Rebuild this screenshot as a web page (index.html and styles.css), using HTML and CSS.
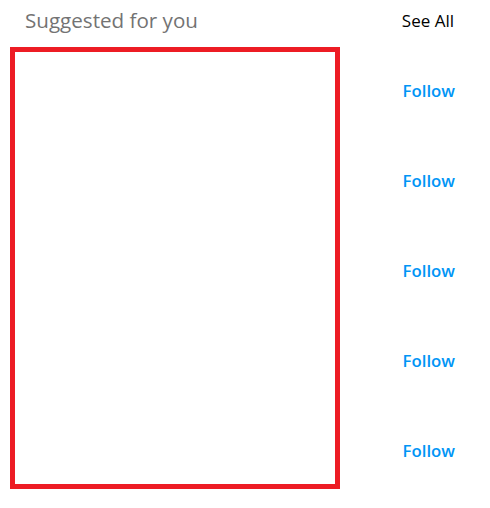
FILE: index.html
```html
<!DOCTYPE html>
<html>
<head>
<meta charset="utf-8">
<link rel="stylesheet" href="styles.css">
</head>
<body>
<div class="panel">
  <div class="header">
    <span class="title">Suggested for you</span>
    <span class="see-all">See All</span>
  </div>
  <div class="list">
    <div class="row"><button class="follow">Follow</button></div>
    <div class="row"><button class="follow">Follow</button></div>
    <div class="row"><button class="follow">Follow</button></div>
    <div class="row"><button class="follow">Follow</button></div>
    <div class="row"><button class="follow">Follow</button></div>
  </div>
  <div class="redact"></div>
</div>
</body>
</html>
```
FILE: styles.css
```css
html, body {
  margin: 0;
  padding: 0;
  background: #ffffff;
}
body {
  font-family: "Open Sans", "Noto Sans", sans-serif;
}
.panel {
  position: relative;
  width: 490px;
  height: 508px;
}
.header {
  display: flex;
  justify-content: space-between;
  align-items: center;
  height: 40px;
  padding: 0 36px 0 25px;
}
.title {
  color: #737373;
  font-size: 20.6px;
  font-weight: 400;
}
.see-all {
  color: #000000;
  font-size: 17px;
  font-weight: 400;
}
.list {
  display: flex;
  flex-direction: column;
  margin-top: 5px;
}
.row {
  height: 90px;
  display: flex;
  align-items: center;
  justify-content: flex-end;
  padding-right: 35px;
}
.follow {
  border: 0;
  background: none;
  padding: 0;
  font-family: inherit;
  font-size: 16.8px;
  font-weight: 600;
  color: #0095f6;
}
.redact {
  position: absolute;
  left: 10px;
  top: 47px;
  width: 320px;
  height: 432px;
  border: 5px solid #ed1c24;
}
```
